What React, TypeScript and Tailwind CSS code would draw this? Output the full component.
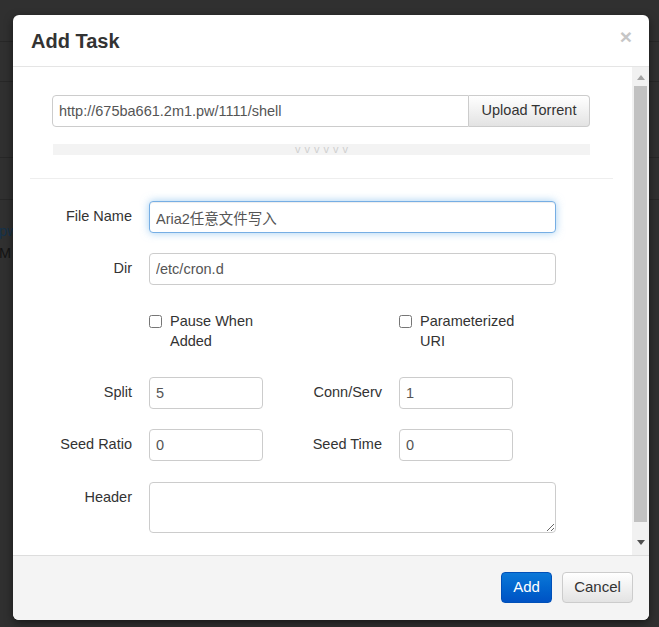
import React from 'react';

const font = "font-['Liberation_Sans','Noto_Sans_CJK_SC',Arial,sans-serif]";

const Field = ({ value, className = '' }: { value: string; className?: string }) => (
  <input
    readOnly
    defaultValue={value}
    className={`h-[32px] rounded-[4px] border border-[#ccc] bg-white px-[6px] text-[14.5px] text-[#555] outline-none ${className}`}
  />
);

const Label = ({ text, className = '' }: { text: string; className?: string }) => (
  <div className={`flex h-[32px] items-center justify-end text-[14.5px] text-[#333] ${className}`}>{text}</div>
);

const Check = ({ lines }: { lines: string[] }) => (
  <div className="flex items-start gap-[8px]">
    <input type="checkbox" className="mt-[4px] h-[13px] w-[13px] shrink-0" />
    <div className="text-[14.5px] leading-[20px] text-[#333]">
      {lines.map((l) => (
        <div key={l}>{l}</div>
      ))}
    </div>
  </div>
);

const Backdrop = () => (
  <div className="flex flex-col">
    <div className="h-[42px] border-b border-[#272727]" />
    <div className="h-[40px] border-b border-[#272727]" />
    <div className="h-[76px] border-b border-[#272727]" />
    <div className="h-[42px] border-b border-[#272727]" />
    <div className="ml-[-1px] pt-[20px] text-[14.5px] leading-[22px]">
      <div className="text-[#15324a]">pw</div>
      <div className="text-[#141414]">M</div>
    </div>
  </div>
);

const ScrollBar = () => (
  <div className="flex w-[17px] flex-col bg-[#f1f1f1]">
    <div className="flex h-[17px] items-end justify-center pb-[4px]">
      <svg width="8" height="5" viewBox="0 0 8 5">
        <path d="M0 5 L4 0 L8 5 Z" fill="#a3a3a3" />
      </svg>
    </div>
    <div className="mx-[2px] mt-[2px] h-[436px] bg-[#c1c1c1]" />
    <div className="flex flex-1 items-start justify-center pt-[18px]">
      <svg width="8" height="5" viewBox="0 0 8 5">
        <path d="M0 0 L8 0 L4 5 Z" fill="#505050" />
      </svg>
    </div>
  </div>
);

export default function App() {
  return (
    <div className={`relative h-[627px] w-[659px] overflow-hidden bg-[#303030] ${font}`}>
      <Backdrop />

      <div className="absolute left-[13px] top-[15px] flex h-[605px] w-[636px] flex-col overflow-hidden rounded-[6px] bg-white shadow-[0_3px_9px_rgba(0,0,0,0.5)]">
        {/* header */}
        <div className="flex h-[52px] shrink-0 items-center justify-between border-b border-[#e5e5e5] pl-[18px] pr-[17px]">
          <h3 className="text-[20px] font-bold text-[#333]">Add Task</h3>
          <span className="mt-[-8px] text-[21px] font-bold leading-none text-[#c6c6c6]">×</span>
        </div>

        {/* body */}
        <div className="flex h-[488px] shrink-0">
          <div className="flex-1 pl-[17px] pr-[19px] pt-[28px]">
            <div className="ml-[22px] mr-[23px]">
              <div className="flex h-[32px]">
                <input
                  readOnly
                  defaultValue="http://675ba661.2m1.pw/1111/shell"
                  className="h-[32px] flex-1 rounded-l-[4px] border border-[#ccc] px-[6px] text-[14.5px] text-[#555] outline-none"
                />
                <button className="h-[32px] w-[121px] rounded-r-[4px] border border-l-0 border-[#ccc] bg-gradient-to-b from-white to-[#e3e3e3] text-[14.5px] text-[#333]">
                  Upload Torrent
                </button>
              </div>
              <div className="mt-[17px] ml-[1px] flex h-[11px] items-center justify-center bg-[#f3f3f3] pl-[4px] text-[11px] leading-none tracking-[4px] text-[#cfcfcf]">
                vvvvvv
              </div>
            </div>

            <div className="mt-[23px] border-t border-[#eee]" />

            <div className="mt-[22px] flex">
              <Label text="File Name" className="w-[102px]" />
              <input
                readOnly
                defaultValue="Aria2任意文件写入"
                className="ml-[17px] h-[32px] w-[407px] rounded-[4px] border border-[#76aee4] bg-white px-[6px] text-[14.5px] text-[#555] shadow-[inset_0_1px_1px_rgba(0,0,0,0.075),0_0_8px_rgba(102,175,233,0.6)] outline-none"
              />
            </div>

            <div className="mt-[20px] flex">
              <Label text="Dir" className="w-[102px]" />
              <Field value="/etc/cron.d" className="ml-[17px] w-[407px]" />
            </div>

            <div className="mt-[26px] flex pl-[119px]">
              <div className="w-[250px]">
                <Check lines={['Pause When', 'Added']} />
              </div>
              <Check lines={['Parameterized', 'URI']} />
            </div>

            <div className="mt-[26px] flex">
              <Label text="Split" className="w-[102px]" />
              <Field value="5" className="ml-[17px] w-[114px]" />
              <Label text="Conn/Serv" className="w-[119px]" />
              <Field value="1" className="ml-[17px] w-[114px]" />
            </div>

            <div className="mt-[20px] flex">
              <Label text="Seed Ratio" className="w-[102px]" />
              <Field value="0" className="ml-[17px] w-[114px]" />
              <Label text="Seed Time" className="w-[119px]" />
              <Field value="0" className="ml-[17px] w-[114px]" />
            </div>

            <div className="mt-[21px] flex">
              <Label text="Header" className="w-[102px]" />
              <textarea
                readOnly
                className="ml-[17px] h-[51px] w-[407px] rounded-[4px] border border-[#ccc] px-[6px] text-[14.5px] text-[#555] outline-none"
              />
            </div>
          </div>
          <ScrollBar />
        </div>

        {/* footer */}
        <div className="flex flex-1 items-start justify-end gap-[10px] border-t border-[#ddd] bg-[#f4f4f4] pr-[16px] pt-[16px]">
          <button className="h-[31px] w-[51px] rounded-[4px] border border-[#0050b8] bg-gradient-to-b from-[#0c78d8] to-[#0052c4] text-[15px] text-white">
            Add
          </button>
          <button className="h-[31px] w-[71px] rounded-[4px] border border-[#ccc] bg-gradient-to-b from-white to-[#e3e3e3] text-[15px] text-[#333]">
            Cancel
          </button>
        </div>
      </div>
    </div>
  );
}
